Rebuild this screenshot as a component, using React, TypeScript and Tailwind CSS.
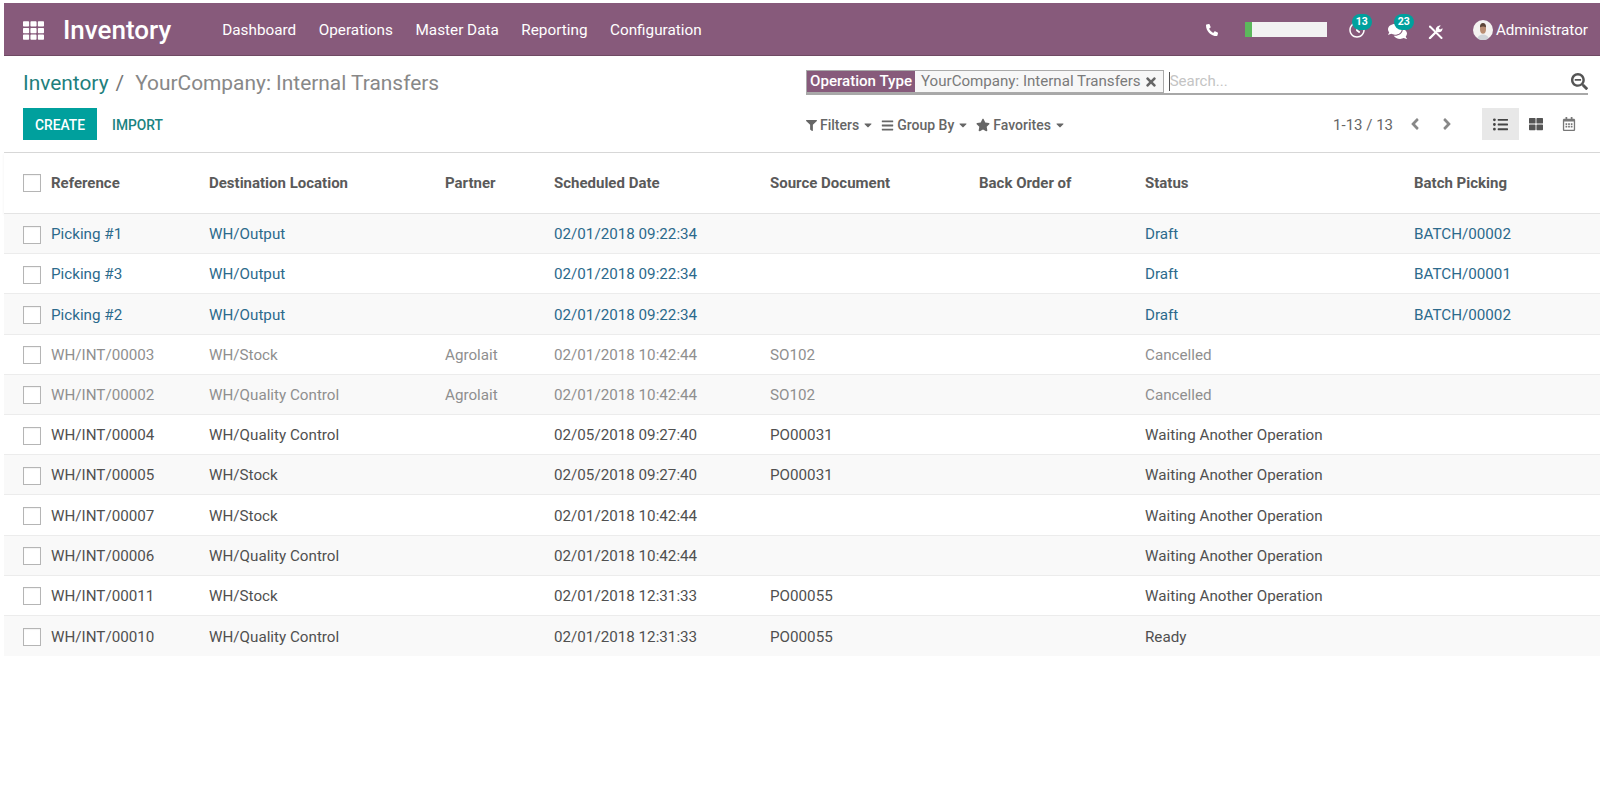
import {
  FaTh,
  FaPhoneAlt,
  FaTimes,
  FaFilter,
  FaBars,
  FaStar,
  FaCaretDown,
  FaAngleLeft,
  FaAngleRight,
  FaListUl,
  FaThLarge,
  FaRegCalendarAlt,
  FaSearchMinus,
  FaComments,
  FaRegClock,
} from 'react-icons/fa';

type Tone = 'link' | 'muted' | 'normal';

interface Row {
  ref: string;
  dest: string;
  partner?: string;
  date: string;
  source?: string;
  status: string;
  batch?: string;
  tone: Tone;
}

const ROWS: Row[] = [
  { ref: 'Picking #1', dest: 'WH/Output', date: '02/01/2018 09:22:34', status: 'Draft', batch: 'BATCH/00002', tone: 'link' },
  { ref: 'Picking #3', dest: 'WH/Output', date: '02/01/2018 09:22:34', status: 'Draft', batch: 'BATCH/00001', tone: 'link' },
  { ref: 'Picking #2', dest: 'WH/Output', date: '02/01/2018 09:22:34', status: 'Draft', batch: 'BATCH/00002', tone: 'link' },
  { ref: 'WH/INT/00003', dest: 'WH/Stock', partner: 'Agrolait', date: '02/01/2018 10:42:44', source: 'SO102', status: 'Cancelled', tone: 'muted' },
  { ref: 'WH/INT/00002', dest: 'WH/Quality Control', partner: 'Agrolait', date: '02/01/2018 10:42:44', source: 'SO102', status: 'Cancelled', tone: 'muted' },
  { ref: 'WH/INT/00004', dest: 'WH/Quality Control', date: '02/05/2018 09:27:40', source: 'PO00031', status: 'Waiting Another Operation', tone: 'normal' },
  { ref: 'WH/INT/00005', dest: 'WH/Stock', date: '02/05/2018 09:27:40', source: 'PO00031', status: 'Waiting Another Operation', tone: 'normal' },
  { ref: 'WH/INT/00007', dest: 'WH/Stock', date: '02/01/2018 10:42:44', status: 'Waiting Another Operation', tone: 'normal' },
  { ref: 'WH/INT/00006', dest: 'WH/Quality Control', date: '02/01/2018 10:42:44', status: 'Waiting Another Operation', tone: 'normal' },
  { ref: 'WH/INT/00011', dest: 'WH/Stock', date: '02/01/2018 12:31:33', source: 'PO00055', status: 'Waiting Another Operation', tone: 'normal' },
  { ref: 'WH/INT/00010', dest: 'WH/Quality Control', date: '02/01/2018 12:31:33', source: 'PO00055', status: 'Ready', tone: 'normal' },
];

const TONES: Record<Tone, string> = {
  link: 'text-[#2c6a8c]',
  muted: 'text-[#8f8f8f]',
  normal: 'text-[#505050]',
};

const COLS = 'grid grid-cols-[47px_158px_236px_109px_216px_209px_166px_269px_1fr] items-center';

function Checkbox() {
  return <span className="ml-[19px] block h-[18px] w-[18px] border border-[#b5b5b5] bg-white shadow-[inset_0_1px_1px_rgba(0,0,0,0.05)]" />;
}

function Badge({ children, className }: { children: string; className: string }) {
  return (
    <span className={`absolute flex h-[16px] w-[20px] items-center justify-center rounded-full bg-[#00a09d] text-[10.500px] font-bold text-white ${className}`}>
      {children}
    </span>
  );
}

function Avatar() {
  return (
    <svg width="20" height="20" viewBox="0 0 20 20">
      <circle cx="10" cy="10" r="10" fill="#f4f2f0" />
      <path d="M4.500 18.500c.5-3 3-4 5.500-4s5 1 5.500 4a10 10 0 0 1-11 0z" fill="#cfd4d8" />
      <ellipse cx="10" cy="9" rx="3" ry="4.800" fill="#b98d72" />
      <path d="M7 7.500c-.3-3.200 1.300-4.500 3-4.500s3.300 1.300 3 4.500c-1.500-1.200-4.500-1.200-6 0z" fill="#5a4436" />
    </svg>
  );
}

// wrench and screwdriver crossed, like the debug menu in the reference
function ToolsIcon() {
  return (
    <svg width="15" height="14" viewBox="0 0 15 14" fill="none" stroke="white" strokeLinecap="round">
      <path d="M2 13 9.500 5.500" strokeWidth="2.400" />
      <path d="M7.800 5.200C7.500 2.500 10 .2 12.800.6L10.800 3l1.200 1.500 2.600-1.300c.2 2.500-2.200 4.600-4.600 4z" fill="white" stroke="none" />
      <path d="M2 1.500 13.500 13" strokeWidth="2" />
    </svg>
  );
}

export default function App() {
  return (
    <div className="min-h-[785px] bg-white pl-1 pt-[3px] font-['Roboto',sans-serif] text-[15.200px] text-[#4c4c4c]">
      {/* Navbar */}
      <nav className="flex h-[53px] items-center border-b border-[#6f4a63] bg-[#875a7b] pt-[2px] text-white">
        <FaTh className="ml-[19px] text-[21px]" />
        <span className="ml-[19px] text-[26px] font-medium leading-none">Inventory</span>
        <div className="ml-[51px] flex gap-[22.500px] text-[15.300px]">
          <span>Dashboard</span>
          <span>Operations</span>
          <span>Master Data</span>
          <span>Reporting</span>
          <span>Configuration</span>
        </div>
        <div className="ml-auto flex items-center">
          <FaPhoneAlt className="text-[12px]" />
          <div className="ml-[27px] flex h-[15px] w-[82px] bg-[#f2f2f2]">
            <span className="h-full w-[7px] bg-[#5cb85c]" />
          </div>
          <div className="relative ml-[22px] h-[16px] w-[16px]">
            <FaRegClock className="text-[16px]" />
            <Badge className="-top-[8px] left-[3px]">13</Badge>
          </div>
          <div className="relative ml-[23px] h-[16px] w-[20px]">
            <FaComments className="text-[19px]" />
            <Badge className="-top-[8px] left-[6px]">23</Badge>
          </div>
          <div className="ml-[20px] mt-[4px]">
            <ToolsIcon />
          </div>
          <div className="ml-[30px]">
            <Avatar />
          </div>
          <span className="ml-[3px] mr-[12px] text-[15.200px]">Administrator</span>
        </div>
      </nav>

      {/* Control panel */}
      <div className="flex h-[97px] border-b border-[#d9d9d9]">
        <div className="w-[802px] pl-[19px]">
          <div className="mt-[13px] flex h-[30px] items-center text-[20.900px]">
            <span className="text-[#1f7f7d]">Inventory</span>
            <span className="ml-[7px] text-[#777]">/</span>
            <span className="ml-[11px] text-[#888]">YourCompany: Internal Transfers</span>
          </div>
          <div className="mt-[9px] flex items-center text-[13.800px] font-medium">
            <span className="flex h-[32px] w-[74px] items-center justify-center bg-[#00a09d] pt-[2px] text-white">CREATE</span>
            <span className="ml-[15px] pt-[2px] text-[#1a8381]">IMPORT</span>
          </div>
        </div>

        <div className="flex flex-1 flex-col pr-[12px]">
          <div className="mt-[14px] flex h-[25px] items-stretch border-b-2 border-[#a8a8a8]">
            <div className="flex h-[23px] items-center border border-[#aaa] bg-[#f7f7f7] text-[15.100px]">
              <span className="flex h-full items-center bg-[#875a7b] px-[3px] font-medium text-white">Operation Type</span>
              <span className="ml-[6px] text-[#7a7a7a]">YourCompany: Internal Transfers</span>
              <FaTimes className="ml-[3px] mr-[5px] text-[14px] text-[#666]" />
            </div>
            <span className="ml-[5px] h-[19px] w-px self-center bg-[#555]" />
            <span className="self-center text-[15px] text-[#c4c4c4]">Search...</span>
            <FaSearchMinus className="ml-auto self-center text-[17px] text-[#555]" />
          </div>

          <div className="mt-[13px] flex h-[32px] items-center">
            <div className="flex items-center pt-[2px] text-[14px] font-medium text-[#666]">
              <FaFilter className="text-[11px]" />
              <span className="ml-[3px]">Filters</span>
              <FaCaretDown className="ml-[3px] text-[12px]" />
              <FaBars className="ml-[7px] text-[13px]" />
              <span className="ml-[3px]">Group By</span>
              <FaCaretDown className="ml-[3px] text-[12px]" />
              <FaStar className="ml-[7px] text-[14px]" />
              <span className="ml-[3px]">Favorites</span>
              <FaCaretDown className="ml-[3px] text-[12px]" />
            </div>
            <span className="ml-auto pt-[2px] text-[15px] text-[#666]">1-13 / 13</span>
            <FaAngleLeft className="ml-[13px] text-[18px] text-[#888]" />
            <FaAngleRight className="ml-[14px] text-[18px] text-[#888]" />
            <div className="ml-[26px] flex h-[32px] w-[37px] items-center justify-center bg-[#e8e8e8]">
              <FaListUl className="text-[15px] text-[#444]" />
            </div>
            <div className="flex h-[32px] w-[34px] items-center justify-center">
              <FaThLarge className="text-[14px] text-[#555]" />
            </div>
            <div className="flex h-[32px] w-[31px] items-center justify-center">
              <FaRegCalendarAlt className="text-[14px] text-[#777]" />
            </div>
            <span className="w-[4px]" />
          </div>
        </div>
      </div>

      {/* List */}
      <div className={`${COLS} h-[61px] border-b border-[#e4e4e4] text-[15px] font-bold text-[#5a5a5a] shadow-[0_1px_3px_rgba(0,0,0,0.06)]`}>
        <Checkbox />
        <span>Reference</span>
        <span>Destination Location</span>
        <span>Partner</span>
        <span>Scheduled Date</span>
        <span>Source Document</span>
        <span>Back Order of</span>
        <span>Status</span>
        <span>Batch Picking</span>
      </div>
      {ROWS.map((row, i) => (
        <div
          key={row.ref}
          className={`${COLS} h-[40.200px] border-b border-[#ececec] pt-[2px] last:border-b-0 ${TONES[row.tone]} ${i % 2 === 0 ? 'bg-[#f9f9f9]' : 'bg-white'}`}
        >
          <Checkbox />
          <span>{row.ref}</span>
          <span>{row.dest}</span>
          <span>{row.partner}</span>
          <span>{row.date}</span>
          <span>{row.source}</span>
          <span />
          <span>{row.status}</span>
          <span>{row.batch}</span>
        </div>
      ))}
    </div>
  );
}
